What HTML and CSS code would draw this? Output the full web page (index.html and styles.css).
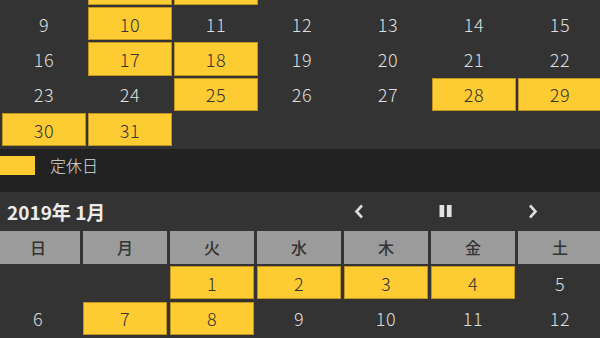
FILE: index.html
```html
<!DOCTYPE html>
<html lang="ja">
<head>
<meta charset="utf-8">
<title>営業日カレンダー</title>
<link rel="stylesheet" href="styles.css">
</head>
<body>
<div class="page">
  <section class="month month-prev">
    <div class="days">
      <div class="day empty"></div><div class="day empty"></div><div class="day empty"></div><div class="day empty"></div><div class="day empty"></div><div class="day empty"></div><div class="day">1</div>
      <div class="day">2</div><div class="day off">3</div><div class="day off">4</div><div class="day">5</div><div class="day">6</div><div class="day">7</div><div class="day">8</div>
      <div class="day">9</div><div class="day off">10</div><div class="day">11</div><div class="day">12</div><div class="day">13</div><div class="day">14</div><div class="day">15</div>
      <div class="day">16</div><div class="day off">17</div><div class="day off">18</div><div class="day">19</div><div class="day">20</div><div class="day">21</div><div class="day">22</div>
      <div class="day">23</div><div class="day">24</div><div class="day off">25</div><div class="day">26</div><div class="day">27</div><div class="day off">28</div><div class="day off">29</div>
      <div class="day off">30</div><div class="day off">31</div>
    </div>
  </section>

  <div class="legend">
    <span class="swatch"></span>
    <span class="legend-label">定休日</span>
  </div>

  <section class="month month-current">
    <header class="month-head">
      <h2 class="title">2019年 1月</h2>
      <nav class="nav">
        <button class="nav-btn" aria-label="前月">
          <svg width="10" height="15" viewBox="0 0 10 15"><path d="M8 1.5 L2.5 7.5 L8 13.5" fill="none" stroke="#dcdcdc" stroke-width="2.6" stroke-linejoin="miter"/></svg>
        </button>
        <button class="nav-btn" aria-label="一時停止">
          <svg width="14" height="12" viewBox="0 0 14 12"><rect x="0.5" y="0" width="4.7" height="12" fill="#e2e2e2"/><rect x="7.9" y="0" width="4.7" height="12" fill="#e2e2e2"/></svg>
        </button>
        <button class="nav-btn" aria-label="翌月">
          <svg width="10" height="15" viewBox="0 0 10 15"><path d="M2 1.5 L7.5 7.5 L2 13.5" fill="none" stroke="#dcdcdc" stroke-width="2.6" stroke-linejoin="miter"/></svg>
        </button>
      </nav>
    </header>
    <div class="weekdays">
      <div class="wd">日</div><div class="wd">月</div><div class="wd">火</div><div class="wd">水</div><div class="wd">木</div><div class="wd">金</div><div class="wd">土</div>
    </div>
    <div class="days days-current">
      <div class="day empty"></div><div class="day empty"></div><div class="day off">1</div><div class="day off">2</div><div class="day off">3</div><div class="day off">4</div><div class="day">5</div>
      <div class="day">6</div><div class="day off">7</div><div class="day off">8</div><div class="day">9</div><div class="day">10</div><div class="day">11</div><div class="day">12</div>
      <div class="day">13</div><div class="day">14</div><div class="day">15</div><div class="day">16</div><div class="day">17</div><div class="day">18</div><div class="day">19</div>
    </div>
  </section>
</div>
</body>
</html>
```

FILE: styles.css
```css
html, body {
  margin: 0;
  padding: 0;
  background: #333333;
}

body {
  font-family: "Noto Sans CJK JP", "Noto Sans", sans-serif;
  overflow: hidden;
}

.page {
  width: 600px;
  height: 338px;
  overflow: hidden;
  background: #333333;
}

.month-prev {
  margin-top: -63.6px;
  padding: 0 0 2.8px 2px;
}

.days {
  display: grid;
  grid-template-columns: repeat(7, 84px);
  grid-auto-rows: 33.3px;
  column-gap: 2px;
  row-gap: 2px;
}

.day {
  display: flex;
  align-items: center;
  justify-content: center;
  box-sizing: border-box;
  font-size: 18px;
  font-weight: 300;
  letter-spacing: 0.5px;
  color: #dedede;
  line-height: 1;
}

.day.off {
  background: #fdcb32;
  border: 1px solid #c09520;
  color: #333333;
}

.legend {
  height: 43px;
  box-sizing: border-box;
  background: #222222;
  display: flex;
  align-items: flex-start;
  padding-top: 7px;
  gap: 15px;
}

.swatch {
  display: block;
  width: 35px;
  height: 19px;
  background: #fdcb32;
}

.legend-label {
  font-size: 16px;
  font-weight: 300;
  line-height: 19px;
  color: #dcdcdc;
}

.month-head {
  height: 39px;
  display: flex;
  align-items: center;
}

.title {
  flex: 1;
  margin: 0;
  padding-left: 7px;
  font-size: 19px;
  font-weight: 700;
  color: #ececec;
  line-height: 1;
}

.nav {
  display: flex;
  margin-right: 24px;
}

.nav-btn {
  width: 87px;
  height: 39px;
  padding: 0;
  border: 0;
  background: transparent;
  display: flex;
  align-items: center;
  justify-content: center;
}

.weekdays {
  display: grid;
  grid-template-columns: repeat(7, 84px);
  column-gap: 3px;
  margin-left: -4px;
  height: 33px;
}

.wd {
  background: #9b9b9b;
  color: #333333;
  font-size: 16px;
  font-weight: 500;
  display: flex;
  align-items: center;
  justify-content: center;
}

.days-current {
  margin-left: -4px;
  margin-top: 2.5px;
  column-gap: 3px;
  row-gap: 2.5px;
  grid-auto-rows: 33px;
}
```
